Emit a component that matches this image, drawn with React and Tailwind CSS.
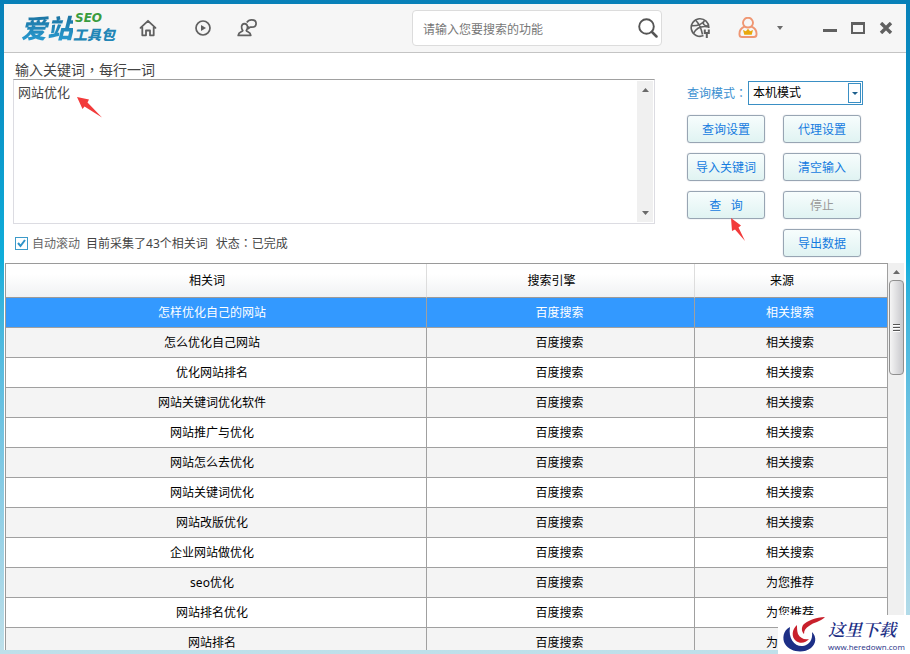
import React, { useState } from "react";

const ROWS = [
  ["怎样优化自己的网站", "百度搜索", "相关搜索"],
  ["怎么优化自己网站", "百度搜索", "相关搜索"],
  ["优化网站排名", "百度搜索", "相关搜索"],
  ["网站关键词优化软件", "百度搜索", "相关搜索"],
  ["网站推广与优化", "百度搜索", "相关搜索"],
  ["网站怎么去优化", "百度搜索", "相关搜索"],
  ["网站关键词优化", "百度搜索", "相关搜索"],
  ["网站改版优化", "百度搜索", "相关搜索"],
  ["企业网站做优化", "百度搜索", "相关搜索"],
  ["seo优化", "百度搜索", "为您推荐"],
  ["网站排名优化", "百度搜索", "为您推荐"],
  ["网站排名", "百度搜索", "为您推荐"],
];

const ACTIONS = [
  { id: "settings", label: "查询设置" },
  { id: "proxy", label: "代理设置" },
  { id: "import", label: "导入关键词" },
  { id: "clear", label: "清空输入" },
  { id: "query", label: "查\u00a0\u00a0 询", arrow: true },
  { id: "stop", label: "停止", disabled: true },
  { id: "export", label: "导出数据", className: "col-start-2" },
];

function Logo() {
  return (
    <div className="flex w-24 items-center whitespace-nowrap font-black italic leading-none">
      <span className="bg-gradient-to-b from-[#1a6f9c] to-[#2a9fd6] bg-clip-text text-[26px] leading-8 text-transparent">
        爱站
      </span>
      <div className="flex flex-col">
        <span className="pl-0.5 font-['DejaVu_Sans',sans-serif] text-xs leading-[14px] text-[#3a9c3e]">SEO</span>
        <span className="text-sm leading-5 text-[#2286b6]">工具包</span>
      </div>
    </div>
  );
}

function HomeIcon() {
  return (
    <svg width="18" height="18" viewBox="0 0 18 18" fill="none" stroke="#606060" strokeWidth="1.8" strokeLinejoin="round" strokeLinecap="round">
      <path d="M1.500 8.800 9 1.800l7.500 7M3.300 8.300v8h3.700v-4.800h4v4.800h3.700v-8" />
    </svg>
  );
}

function PlayIcon() {
  return (
    <svg width="16" height="16" viewBox="0 0 16 16" fill="none" stroke="#606060" strokeWidth="1.7">
      <circle cx="8" cy="8" r="7" />
      <path d="M6 5 11 8l-5 3z" fill="#606060" stroke="none" />
    </svg>
  );
}

function ChatUserIcon() {
  return (
    <svg width="20" height="18" viewBox="0 0 20 18" fill="none" stroke="#606060" strokeWidth="1.700" strokeLinejoin="round">
      <path d="M5.800 11.500C4 9.500 3.800 5 7.500 4.600c3.800.4 3.600 4.900 1.800 6.900.3 1.600 4.200 1.300 4.500 4.900H1.200c.3-3.600 4.300-3.300 4.600-4.900z" />
      <path d="M9.800 3.500C11 1.600 12.700.9 14.600.9c2.600 0 4.500 1.500 4.500 3.600 0 2.200-1.900 3.700-4.500 3.700l-1.300-.1-2 1.500.1-2.300" />
    </svg>
  );
}

function SearchIcon() {
  return (
    <svg width="20" height="20" viewBox="0 0 20 20" fill="none" stroke="#555555" strokeLinecap="round">
      <circle cx="8.500" cy="8.500" r="7.300" strokeWidth="1.900" />
      <path d="m14 14 4.500 4.500" strokeWidth="2.500" />
    </svg>
  );
}

function BallIcon() {
  return (
    <svg width="20" height="22" viewBox="0 0 20 22" fill="none" stroke="#606060" strokeWidth="1.600">
      <path d="M13.500 18.600A8.800 8.800 0 1 1 18.800 11" />
      <path d="M5.500 3c3.800 4 6 9 7 14.500M1.500 8.800c6 .2 10.500-1.300 13-5.200M3.500 16.500c3-6 8-8 15.200-6.500M14.500 3.600c-2.500 3-1 5.400 3.800 5.400" />
      <path d="M14.800 12.500v3.500h4v-3.500M16.800 15.500V21" strokeWidth="2" />
    </svg>
  );
}

function MemberIcon() {
  return (
    <svg width="20" height="22" viewBox="0 0 20 22" fill="none">
      <path
        d="M6.700 9.500a5 5 0 1 1 6.600 0c3.500 1.400 5.500 4.500 5.200 8.200-.1 1.500-1 2.300-2.500 2.300H4c-1.500 0-2.400-.8-2.500-2.300-.3-3.700 1.700-6.800 5.200-8.200zM6.500 9.400c2.300 1.400 4.700 1.400 7 0"
        stroke="#ef9672"
        strokeWidth="1.900"
      />
      <path d="m5 13 2.900 1.300L10 11.800l2.100 2.500L15 13l-1.300 4.800H6.300z" fill="#e9a90c" />
    </svg>
  );
}

function RedArrow({ className, d, viewBox }) {
  return (
    <svg className={className} viewBox={viewBox} fill="#f23b3b" aria-hidden="true">
      <path d={d} />
    </svg>
  );
}

function Triangle({ up }) {
  return (
    <svg width="7" height="4" viewBox="0 0 7 4" fill="#6a6a6a">
      <path d={up ? "M0 4 3.500 0 7 4z" : "M0 0h7L3.500 4z"} />
    </svg>
  );
}

// the TC face centres full-width punctuation in its box
function Punct({ children }) {
  return <span className="font-['Noto_Sans_CJK_TC',sans-serif]" lang="zh-TW">{children}</span>;
}

function TitleBar() {
  return (
    <header className="flex h-[49px] shrink-0 items-center border-b border-[#c4c4c4] bg-[#f6f6f6] pl-[17px] pr-[13px]">
      <Logo />
      <nav className="ml-[22px] flex items-center">
        <button type="button" aria-label="主页"><HomeIcon /></button>
        <button type="button" aria-label="播放" className="ml-[38px]"><PlayIcon /></button>
        <button type="button" aria-label="客服" className="ml-[26px]"><ChatUserIcon /></button>
      </nav>
      <form className="ml-auto flex h-9 w-[250px] items-center rounded border border-[#dcdcdc] bg-white pl-2.5 pr-[3px]">
        <input
          type="text"
          aria-label="搜索功能"
          placeholder="请输入您要搜索的功能"
          className="min-w-0 flex-1 pt-1 text-xs text-[#666] outline-none placeholder:text-[#777]"
        />
        <button type="button" aria-label="搜索"><SearchIcon /></button>
      </form>
      <div className="ml-7 flex items-center">
        <button type="button" aria-label="工具"><BallIcon /></button>
        <button type="button" aria-label="会员" className="ml-7"><MemberIcon /></button>
        <button type="button" aria-label="会员菜单" className="ml-[19px]">
          <svg width="6" height="4" viewBox="0 0 6 4" fill="#6b6b6b"><path d="M0 0h6L3 4z" /></svg>
        </button>
      </div>
      <div className="ml-10 flex items-center gap-3.5">
        <button type="button" aria-label="最小化" className="pt-1">
          <svg width="14" height="3" viewBox="0 0 14 3"><path d="M0 0h14v3H0z" fill="#606060" /></svg>
        </button>
        <button type="button" aria-label="最大化">
          <svg width="14" height="12" viewBox="0 0 14 12" fill="none" stroke="#606060">
            <path d="M1 0v12M13 0v12M0 11h14" strokeWidth="2" />
            <path d="M0 1.500h14" strokeWidth="3" />
          </svg>
        </button>
        <button type="button" aria-label="关闭">
          <svg width="14" height="12" viewBox="0 0 14 12" stroke="#606060" strokeWidth="3.400">
            <path d="m2 1 10 10M12 1 2 11" />
          </svg>
        </button>
      </div>
    </header>
  );
}

function ActionButton({ action }) {
  return (
    <button
      type="button"
      disabled={action.disabled}
      className={`relative h-7 rounded-[3px] border border-[#98a5b3] bg-gradient-to-b from-[#f7fdfd] to-[#e0f3f2] pt-0.5 text-xs text-[#147be0] shadow-[0_0_1px_#98a5b3] disabled:text-[#9a9a9a] ${action.className || ""}`}
    >
      {action.label}
      {action.arrow && (
        <RedArrow
          className="absolute left-[43px] top-[26px] z-10 h-[23px] w-[15px]"
          viewBox="0 0 15 23"
          d="M0 0 10 7.500 7.500 9.500 14 23 4 11.500 1 13z"
        />
      )}
    </button>
  );
}

function QueryPanel() {
  const [keywords, setKeywords] = useState("网站优化");

  return (
    <section className="flex pl-[9px] pr-[43px]">
      <div className="min-w-0 flex-1 pt-1.5">
        <label htmlFor="keywords" className="block h-5 pl-0.5 text-sm leading-5 text-[#444]">
          输入关键词<Punct>，</Punct>每行一词
        </label>
        <div className="relative flex h-[145px] border border-[#dcdce2] border-t-[#a0a0a0]">
          <textarea
            id="keywords"
            value={keywords}
            onChange={(e) => setKeywords(e.target.value)}
            className="min-w-0 flex-1 resize-none overflow-hidden px-1 py-0.5 text-[13px] leading-5 text-[#444] outline-none"
          />
          <div className="my-px mr-px flex w-4 flex-col items-center justify-between bg-[#f0f0f0] py-[7px]">
            <Triangle up />
            <Triangle />
          </div>
          <RedArrow
            className="absolute left-[63px] top-[17px] h-[21px] w-[25px]"
            viewBox="0 0 25 21"
            d="M0 0 12 2.500 10.500 5.500 25 20.500 7.500 9.500 5.500 12z"
          />
        </div>
        <div className="flex h-[39px] items-center text-xs text-[#444]">
          <label className="flex items-center gap-1 pl-0.5 text-[#666]">
            <input
              type="checkbox"
              defaultChecked
              className="size-[13px] appearance-none border border-[#3c9ac9] bg-white checked:bg-[url('data:image/svg+xml,%3Csvg%20xmlns=%22http://www.w3.org/2000/svg%22%20viewBox=%220%200%2011%2011%22%3E%3Cpath%20d=%22M2%205l2.500%203L9%202%22%20fill=%22none%22%20stroke=%22%232f93c8%22%20stroke-width=%222%22/%3E%3C/svg%3E')]"
            />
            自动滚动
          </label>
          <span className="ml-1.5">目前采集了43个相关词</span>
          <span className="ml-2">状态<Punct>：</Punct>已完成</span>
        </div>
      </div>

      <div className="ml-8 w-44 shrink-0 pt-7">
        <div className="flex items-center justify-between">
          <label htmlFor="mode" className="whitespace-nowrap text-xs text-[#3a8fd0]">查询模式<Punct>：</Punct></label>
          <div className="relative">
            <select
              id="mode"
              className="block h-6 w-[115px] appearance-none border border-[#3a8fc4] bg-white px-1 text-xs text-black outline-none"
            >
              <option>本机模式</option>
            </select>
            <span className="pointer-events-none absolute inset-y-0.5 right-0.5 flex w-[13px] items-center justify-center border border-[#3a8fc4] bg-white">
              <svg width="6" height="3" viewBox="0 0 6 3" fill="#1d5f8c"><path d="M0 0h6L3 3z" /></svg>
            </span>
          </div>
        </div>
        <div className="mt-2.5 grid grid-cols-[78px_78px] gap-x-[18px] gap-y-2.5">
          {ACTIONS.map((action) => (
            <ActionButton key={action.id} action={action} />
          ))}
        </div>
      </div>
    </section>
  );
}

function ResultTable() {
  const [selected, setSelected] = useState(0);

  return (
    <section className="flex min-h-0 flex-1 pl-px">
      <div className="min-w-0 flex-1 overflow-hidden border-l border-t border-[#9a9a9a]">
        <table className="w-full table-fixed border-separate border-spacing-0 text-center text-xs text-black">
          <thead>
            <tr className="h-[34px] bg-gradient-to-b from-white from-30% to-[#eff1f3]">
              <th className="border-b border-r border-b-[#9a9a9a] border-r-[#dddddd] pr-[18px] font-normal">相关词</th>
              <th className="w-[268px] border-b border-r border-b-[#9a9a9a] border-r-[#dddddd] pr-[18px] font-normal">搜索引擎</th>
              <th className="w-[193px] border-b border-r border-b-[#9a9a9a] border-r-[#a0a0a0] pr-[18px] font-normal">来源</th>
            </tr>
          </thead>
          <tbody>
            {ROWS.map((row, i) => (
              <tr
                key={row[0]}
                onClick={() => setSelected(i)}
                className={`h-[30px] ${
                  i === selected ? "bg-[#3399ff] text-white" : i % 2 ? "bg-[#f4f4f4]" : "bg-white"
                }`}
              >
                {row.map((cell, j) => (
                  <td key={j} className="border-b border-r border-[#a0a0a0] pr-0.5 first:pr-2">
                    {cell}
                  </td>
                ))}
              </tr>
            ))}
          </tbody>
        </table>
      </div>
      <div className="mr-0.5 flex w-4 shrink-0 flex-col items-center bg-[#f0f0f0] pt-[7px]">
        <Triangle up />
        <div className="mt-1.5 flex h-[95px] w-[15px] flex-col items-center justify-center gap-px rounded-sm border border-[#8f8f8f] bg-gradient-to-r from-[#f5f5f5] to-[#c8c8cc]">
          <span className="h-0.5 w-[7px] border-b border-white bg-[#555]" />
          <span className="h-0.5 w-[7px] border-b border-white bg-[#555]" />
          <span className="h-0.5 w-[7px] border-b border-white bg-[#555]" />
        </div>
      </div>
    </section>
  );
}

function Watermark() {
  return (
    <div className="absolute bottom-0 right-0 flex h-[39px] w-[132px] items-center bg-white">
      <svg width="48" height="39" viewBox="0 0 48 39" className="shrink-0">
        <path d="M12 12C5 15 4 24 7 29c5 8 18 10 26 4 5-4 6-11 1-16 1 8-3 13-9 14-8 1-15-7-13-19z" fill="#1d2f86" />
        <path d="M19 10c-5 4-6 12-1 16 4 3 10 2 13-2-5 1-9-1-11-5-1-3-1-6-1-9z" fill="#c8202c" />
        <path d="M47 2C38 2 29 6 25 10c-2 4-1 7 1 9 0-4 2-6 5-8C36 7 42 7 47 2z" fill="#c8202c" />
      </svg>
      <div className="flex flex-col pl-0.5 text-[#1d2f86]">
        <span className="whitespace-nowrap font-['Noto_Serif_CJK_SC','Noto_Sans_CJK_SC',serif] text-[17px] font-semibold italic leading-6">
          这里下载
        </span>
        <a href="#" className="font-['Open_Sans',sans-serif] text-[8px] leading-3">www.heredown.com</a>
      </div>
    </div>
  );
}

export default function App() {
  return (
    <div className="relative h-screen overflow-hidden bg-gradient-to-b from-[#0880b8] via-[#10aedb] via-40% to-[#bfe0ea] p-1 font-['Noto_Sans','Noto_Sans_CJK_SC',sans-serif]">
      <div className="flex h-full flex-col overflow-hidden bg-white">
        <TitleBar />
        <QueryPanel />
        <ResultTable />
      </div>
      <Watermark />
    </div>
  );
}
